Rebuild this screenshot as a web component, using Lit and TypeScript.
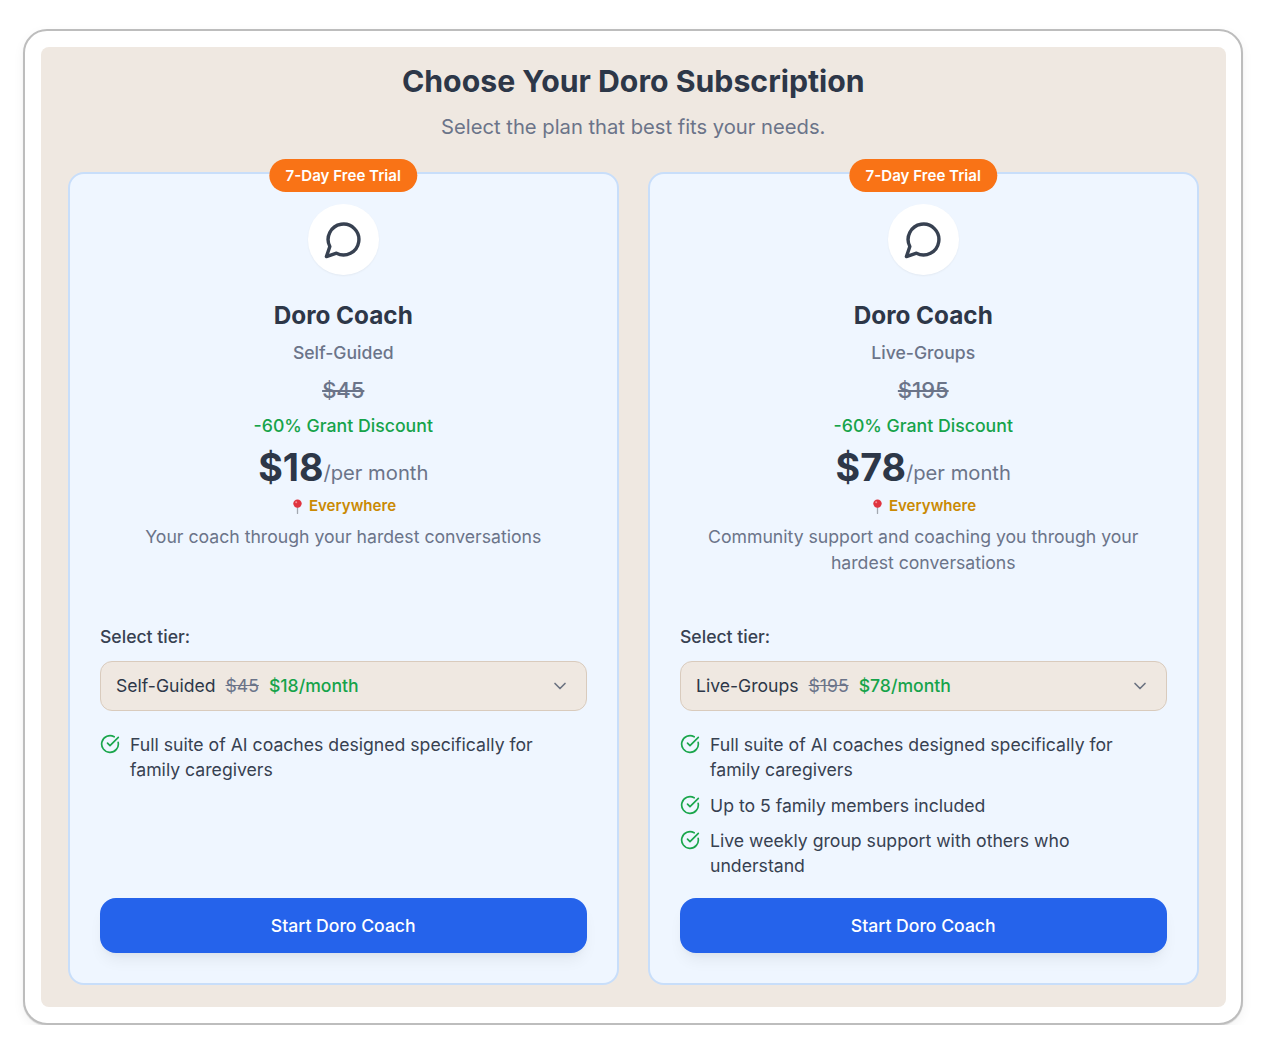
import { LitElement, html, css, svg } from "lit";
import { customElement } from "lit/decorators.js";

interface Plan {
  tier: string;
  was: string;
  now: string;
  blurb: string;
  features: string[];
}

const plans: Plan[] = [
  {
    tier: "Self-Guided",
    was: "$45",
    now: "$18",
    blurb: "Your coach through your hardest conversations",
    features: ["Full suite of AI coaches designed specifically for family caregivers"],
  },
  {
    tier: "Live-Groups",
    was: "$195",
    now: "$78",
    blurb: "Community support and coaching you through your hardest conversations",
    features: [
      "Full suite of AI coaches designed specifically for family caregivers",
      "Up to 5 family members included",
      "Live weekly group support with others who understand",
    ],
  },
];

const chatIcon = svg`<path d="M7.9 20A9 9 0 1 0 4 16.1L2 22Z" />`;
const checkIcon = svg`<path d="M21.801 10A10 10 0 1 1 17 3.335" /><path d="m9 11 3 3L22 4" />`;

@customElement("app-root")
export class AppRoot extends LitElement {
  static styles = css`
    :host {
      display: block;
      font-family: Inter, "Liberation Sans", sans-serif;
      color: #2d3748;
    }
    .frame {
      box-sizing: border-box;
      width: 1220px;
      height: 996px;
      margin: 29px 0 0 23px;
      padding: 16px 15px 16px 16px;
      background: #fff;
      border: 2px solid #bdbdbd;
      border-radius: 24px;
      box-shadow: 0 1px 1px rgba(0, 0, 0, 0.12), 0 4px 12px rgba(0, 0, 0, 0.05);
    }
    .panel {
      box-sizing: border-box;
      height: 100%;
      padding: 15px 27.5px 22px 27px;
      background: #efe8e1;
      border-radius: 8px;
    }
    h1 {
      margin: 0;
      font-size: 30.25px;
      line-height: 38px;
      font-weight: 700;
      text-align: center;
      color: #2d3748;
    }
    .lead {
      margin: 13px 0 0;
      font-size: 20.2px;
      line-height: 28px;
      text-align: center;
      color: #6b7489;
    }
    .cards {
      display: grid;
      grid-template-columns: 550.5px 550.5px;
      gap: 29.5px;
      margin-top: 31px;
    }
    .card {
      position: relative;
      box-sizing: border-box;
      height: 813px;
      padding: 30px;
      display: flex;
      flex-direction: column;
      background: #eff6ff;
      border: 2px solid #c8defa;
      border-radius: 16px;
    }
    .badge {
      position: absolute;
      top: -15px;
      left: 50%;
      transform: translateX(-50%);
      padding: 0 16px;
      height: 33px;
      line-height: 33px;
      white-space: nowrap;
      font-size: 15.1px;
      font-weight: 600;
      color: #fff;
      background: #f97316;
      border-radius: 999px;
    }
    .head {
      height: 397px;
      display: flex;
      flex-direction: column;
      align-items: center;
      text-align: center;
    }
    .bubble {
      width: 70.5px;
      height: 70.5px;
      display: flex;
      align-items: center;
      justify-content: center;
      background: #fff;
      border-radius: 50%;
      box-shadow: 0 1px 2px rgba(0, 0, 0, 0.05);
    }
    .bubble svg {
      width: 41px;
      height: 41px;
      fill: none;
      stroke: #374151;
      stroke-width: 2;
      stroke-linecap: round;
      stroke-linejoin: round;
    }
    h2 {
      margin: 22.5px 0 0;
      font-size: 24.3px;
      line-height: 36px;
      font-weight: 700;
      color: #2d3748;
    }
    .sub {
      margin-top: 6px;
      font-size: 17.6px;
      line-height: 28px;
      font-weight: 500;
      color: #6b7489;
    }
    .was {
      margin-top: 7px;
      font-size: 22px;
      line-height: 32px;
      font-weight: 500;
      color: #6b7489;
      text-decoration: line-through;
    }
    .discount {
      margin-top: 6px;
      font-size: 17.7px;
      line-height: 28px;
      font-weight: 500;
      color: #16a34a;
    }
    .price {
      margin-top: 10px;
      line-height: 36px;
      font-size: 37.6px;
      font-weight: 700;
      color: #2d3748;
    }
    .price span {
      position: relative;
      top: -1px;
      font-size: 20.2px;
      font-weight: 400;
      color: #6b7489;
    }
    .where {
      display: flex;
      align-items: center;
      gap: 5.5px;
      margin: 2px 0 0 2px;
      font-size: 15.1px;
      line-height: 24px;
      font-weight: 600;
      color: #ca8a04;
    }
    .where svg {
      width: 11px;
      height: 15px;
    }
    .blurb {
      margin-top: 6px;
      font-size: 17.65px;
      line-height: 25.5px;
      color: #6b7489;
    }
    .label {
      margin-top: 21.5px;
      font-size: 17.6px;
      line-height: 28px;
      font-weight: 500;
      color: #374151;
    }
    .select {
      box-sizing: border-box;
      height: 50px;
      margin-top: 10.5px;
      padding: 0 16px 1px 15px;
      display: flex;
      align-items: center;
      gap: 10px;
      font-size: 17.6px;
      color: #2d3748;
      background: #efe8e1;
      border: 1px solid #d9cbbd;
      border-radius: 12px;
    }
    .select s {
      color: #6b7489;
    }
    .select b {
      font-weight: 500;
      color: #16a34a;
    }
    .select svg {
      width: 20px;
      height: 20px;
      margin-left: auto;
      fill: none;
      stroke: #6b7280;
      stroke-width: 2;
      stroke-linecap: round;
      stroke-linejoin: round;
    }
    ul {
      list-style: none;
      margin: 21px 0 0;
      padding: 0;
      display: flex;
      flex-direction: column;
      gap: 10.5px;
    }
    li {
      display: flex;
      gap: 10px;
      font-size: 17.65px;
      line-height: 25px;
      color: #374151;
    }
    li svg {
      flex: none;
      width: 20px;
      height: 20px;
      margin-top: 2px;
      fill: none;
      stroke: #1aa64c;
      stroke-width: 2;
      stroke-linecap: round;
      stroke-linejoin: round;
    }
    button {
      height: 55.5px;
      margin-top: auto;
      font: inherit;
      font-size: 17.6px;
      font-weight: 500;
      color: #fff;
      background: #2563eb;
      border: none;
      border-radius: 16px;
      box-shadow: 0 10px 15px -3px rgba(0, 0, 0, 0.06), 0 4px 6px -4px rgba(0, 0, 0, 0.06);
    }
  `;

  private renderCard(p: Plan) {
    return html`
      <section class="card">
        <div class="badge">7-Day Free Trial</div>
        <div class="head">
          <div class="bubble"><svg viewBox="0 0 24 24">${chatIcon}</svg></div>
          <h2>Doro Coach</h2>
          <div class="sub">${p.tier}</div>
          <div class="was">${p.was}</div>
          <div class="discount">-60% Grant Discount</div>
          <div class="price">${p.now}<span>/per month</span></div>
          <div class="where">
            <svg viewBox="0 0 11 15">
              <path d="M5.5 8v6.5" stroke="#a3a8b0" stroke-width="1.3" stroke-linecap="round" />
              <circle cx="5.5" cy="4.6" r="4.2" fill="#e0343f" />
              <circle cx="4.2" cy="3.3" r="1" fill="#f28b90" />
            </svg>
            Everywhere
          </div>
          <div class="blurb">${p.blurb}</div>
        </div>
        <div class="label">Select tier:</div>
        <div class="select">
          <span>${p.tier}</span>
          <s>${p.was}</s>
          <b>${p.now}/month</b>
          <svg viewBox="0 0 24 24"><path d="m6 9 6 6 6-6" /></svg>
        </div>
        <ul>
          ${p.features.map((f) => html`<li><svg viewBox="0 0 24 24">${checkIcon}</svg><span>${f}</span></li>`)}
        </ul>
        <button>Start Doro Coach</button>
      </section>
    `;
  }

  render() {
    return html`
      <div class="frame">
        <div class="panel">
          <h1>Choose Your Doro Subscription</h1>
          <p class="lead">Select the plan that best fits your needs.</p>
          <div class="cards">${plans.map((p) => this.renderCard(p))}</div>
        </div>
      </div>
    `;
  }
}
